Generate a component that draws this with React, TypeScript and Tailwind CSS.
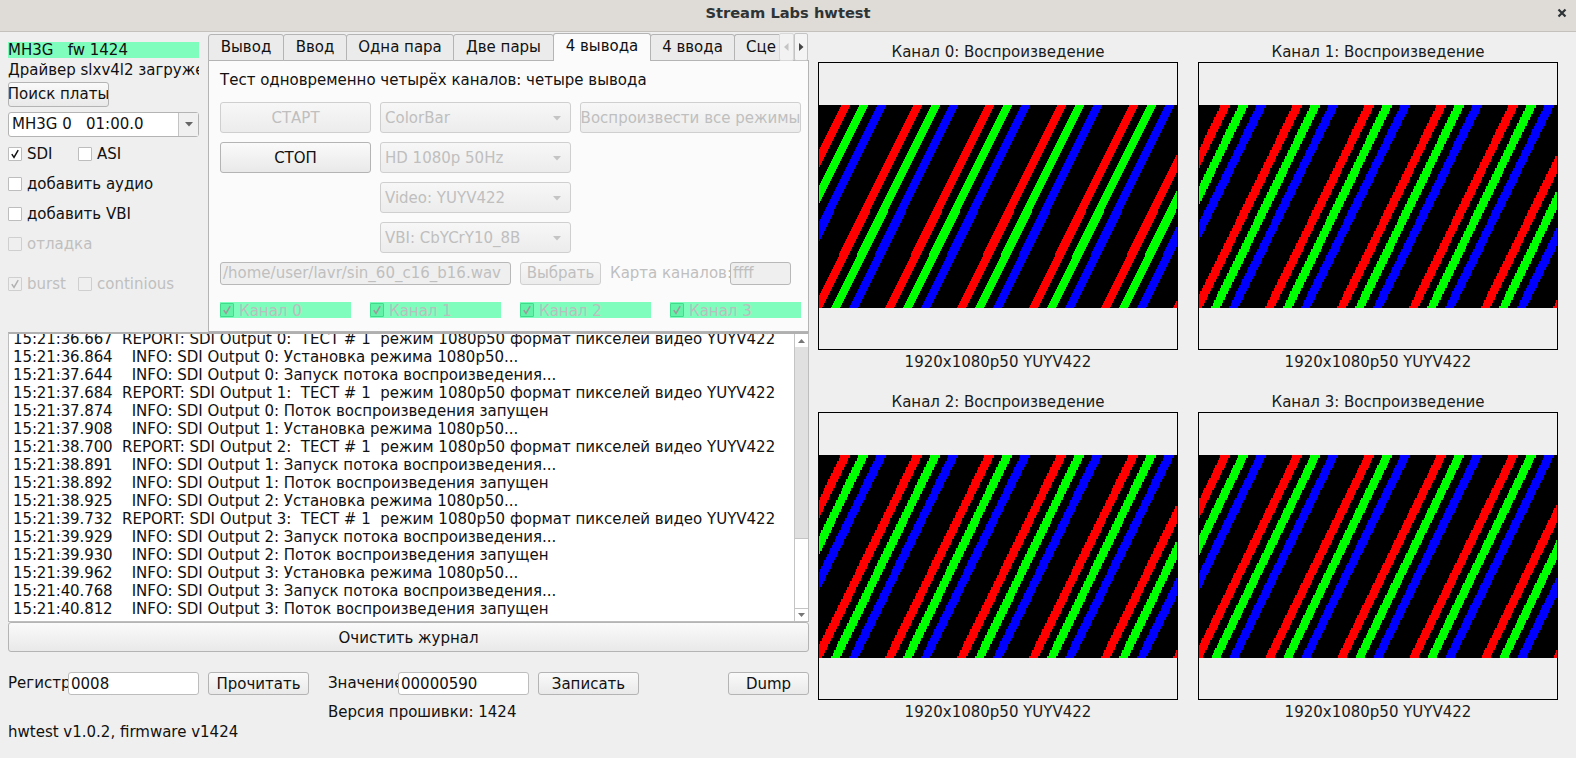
import type { ReactNode } from "react";

const LOG: string[] = [
  "15:21:36.667  REPORT: SDI Output 0:  ТЕСТ # 1  режим 1080p50 формат пикселей видео YUYV422",
  "15:21:36.864    INFO: SDI Output 0: Установка режима 1080p50...",
  "15:21:37.644    INFO: SDI Output 0: Запуск потока воспроизведения...",
  "15:21:37.684  REPORT: SDI Output 1:  ТЕСТ # 1  режим 1080p50 формат пикселей видео YUYV422",
  "15:21:37.874    INFO: SDI Output 0: Поток воспроизведения запущен",
  "15:21:37.908    INFO: SDI Output 1: Установка режима 1080p50...",
  "15:21:38.700  REPORT: SDI Output 2:  ТЕСТ # 1  режим 1080p50 формат пикселей видео YUYV422",
  "15:21:38.891    INFO: SDI Output 1: Запуск потока воспроизведения...",
  "15:21:38.892    INFO: SDI Output 1: Поток воспроизведения запущен",
  "15:21:38.925    INFO: SDI Output 2: Установка режима 1080p50...",
  "15:21:39.732  REPORT: SDI Output 3:  ТЕСТ # 1  режим 1080p50 формат пикселей видео YUYV422",
  "15:21:39.929    INFO: SDI Output 2: Запуск потока воспроизведения...",
  "15:21:39.930    INFO: SDI Output 2: Поток воспроизведения запущен",
  "15:21:39.962    INFO: SDI Output 3: Установка режима 1080p50...",
  "15:21:40.768    INFO: SDI Output 3: Запуск потока воспроизведения...",
  "15:21:40.812    INFO: SDI Output 3: Поток воспроизведения запущен",
];

const TABS = [
  { label: "Вывод", w: "w-[76px]" },
  { label: "Ввод", w: "w-[64px]" },
  { label: "Одна пара", w: "w-[108px]" },
  { label: "Две пары", w: "w-[101px]" },
  { label: "4 вывода", w: "w-[98px]", active: true },
  { label: "4 ввода", w: "w-[85px]" },
];

const SELECTS = ["ColorBar", "HD 1080p 50Hz", "Video: YUYV422", "VBI: CbYCrY10_8B"];

function stripes(rowStep: number) {
  const colors = ["#ff0000", "#00ff00", "#0000ff"];
  return colors.map((color, c) => {
    let d = "";
    for (let y = 0; y < 203; y += rowStep) {
      for (let k = -1; k < 7; k++) {
        const x = 22 + 72 * k + 18 * c - 0.4934 * (y + rowStep / 2);
        d += `M${x.toFixed(2)} ${y}h9.3v${rowStep}h-9.3z`;
      }
    }
    return { color, d };
  });
}

function Check({ checked, disabled, green }: { checked?: boolean; disabled?: boolean; green?: boolean }) {
  const box = green
    ? "bg-[#62f2a8] border-[#3fdc8c]"
    : disabled
      ? "bg-[#efefef] border-[#cfcfcf]"
      : "bg-white border-[#bdbdbd]";
  const tick = green ? "#9a9a9a" : disabled ? "#b0b0b0" : "#111111";
  return (
    <span className={`flex h-[14px] w-[14px] shrink-0 items-center justify-center rounded-[1px] border ${box}`}>
      {checked && (
        <svg width="10" height="10" viewBox="0 0 10 10" fill="none">
          <path d="M1.8 5.2 L4 8.4 L8.2 1.2" stroke={tick} strokeWidth="1.5" />
        </svg>
      )}
    </span>
  );
}

function Option({ label, checked, disabled, className = "" }: { label: string; checked?: boolean; disabled?: boolean; className?: string }) {
  return (
    <div className={`flex h-[16px] items-center gap-[5px] whitespace-nowrap ${className}`}>
      <Check checked={checked} disabled={disabled} />
      <span className={disabled ? "text-[#bfbfbf]" : ""}>{label}</span>
    </div>
  );
}

function Button({ children, disabled, className = "" }: { children: ReactNode; disabled?: boolean; className?: string }) {
  const tone = disabled
    ? "border-[#cfcfcf] text-[#bfbfbf] from-[#f7f7f7] to-[#ececec]"
    : "border-[#b4b4b4] text-[#111111] from-[#fafafa] to-[#e9e9e9]";
  return (
    <div className={`flex shrink-0 items-center justify-center overflow-hidden whitespace-nowrap rounded-[3px] border bg-gradient-to-b ${tone} ${className}`}>
      {children}
    </div>
  );
}

function Arrow({ color = "#c4c4c4" }: { color?: string }) {
  return (
    <svg width="8" height="5" viewBox="0 0 8 5">
      <path d="M0 0H8L4 4.5Z" fill={color} />
    </svg>
  );
}

function Select({ label }: { label: string }) {
  return (
    <div className="flex h-[31px] w-[191px] items-center justify-between rounded-[3px] border border-[#cfcfcf] bg-gradient-to-b from-[#f7f7f7] to-[#ececec] pl-[4px] pr-[9px] pt-[2px] text-[#bfbfbf]">
      <span>{label}</span>
      <Arrow />
    </div>
  );
}

function Field({ value, disabled, className = "" }: { value: string; disabled?: boolean; className?: string }) {
  const tone = disabled ? "bg-[#efefef] border-[#b8b8b8] text-[#bfbfbf]" : "bg-white border-[#bdbdbd]";
  return (
    <div className={`flex h-[23px] shrink-0 items-center overflow-hidden whitespace-nowrap rounded-[3px] border pl-[2px] ${tone} ${className}`}>
      {value}
    </div>
  );
}

function Channel({ label }: { label: string }) {
  return (
    <div className="flex h-[16px] w-[131px] shrink-0 items-center gap-[5px] bg-[#7ffdbd] text-[#bdbdbd]">
      <Check checked green />
      <span className="pt-[2px]">{label}</span>
    </div>
  );
}

function Preview({ index, rowStep }: { index: number; rowStep: number }) {
  return (
    <div className="flex w-[360px] flex-col items-center">
      <div className="flex h-[20px] items-center text-[#1a1a1a]">Канал {index}: Воспроизведение</div>
      <div className="flex h-[288px] w-[360px] flex-col justify-center border border-black bg-[#efefef]">
        <svg className="mt-[1px] block bg-black" width="358" height="203" viewBox="0 0 358 203" shapeRendering="crispEdges">
          {stripes(rowStep).map((s) => (
            <path key={s.color} d={s.d} fill={s.color} />
          ))}
        </svg>
      </div>
      <div className="flex h-[24px] items-center text-[#1a1a1a]">1920x1080p50 YUYV422</div>
    </div>
  );
}

export default function App() {
  return (
    <div className="flex h-[758px] w-[1576px] flex-col overflow-hidden bg-[#efefef] text-[15px] text-[#111111] [font-family:'DejaVu_Sans',sans-serif]">
      <div className="flex h-[32px] shrink-0 items-center justify-center border-b border-[#c4c1bc] bg-[#dfdbd6] pb-[6px]">
        <span className="w-full pl-[19px] text-center text-[14.67px] font-bold text-[#2e3436]">Stream Labs hwtest</span>
        <svg className="mr-[9px] shrink-0" width="10" height="10" viewBox="0 0 10 10" fill="none">
          <path d="M1.5 1.5L8.5 8.5M8.5 1.5L1.5 8.5" stroke="#2e3436" strokeWidth="2.2" />
        </svg>
      </div>

      <div className="flex min-h-0 flex-1">
        <div className="flex w-[818px] shrink-0 flex-col pl-[8px] pr-[9px]">
          <div className="flex h-[300px] shrink-0 gap-[9px]">
            <div className="flex w-[191px] shrink-0 flex-col pt-[10px]">
              <div className="flex h-[16px] items-center whitespace-pre bg-[#7ffdbd]">MH3G   fw 1424</div>
              <div className="mt-[4px] flex h-[16px] items-center overflow-hidden whitespace-nowrap">Драйвер slxv4l2 загружен</div>
              <Button className="mt-[4px] h-[25px] w-[101px]">Поиск платы</Button>
              <div className="mt-[5px] flex h-[25px] items-center rounded-[3px] border border-[#b4b4b4] bg-white">
                <span className="flex-1 whitespace-pre pl-[3px]">MH3G 0   01:00.0</span>
                <span className="flex h-full w-[20px] items-center justify-center border-l border-[#c4c4c4] bg-[#f0f0f0]">
                  <Arrow color="#666666" />
                </span>
              </div>
              <div className="mt-[9px] flex">
                <Option label="SDI" checked className="w-[70px]" />
                <Option label="ASI" />
              </div>
              <Option label="добавить аудио" className="mt-[14px]" />
              <Option label="добавить VBI" className="mt-[14px]" />
              <Option label="отладка" disabled className="mt-[14px]" />
              <div className="mt-[24px] flex">
                <Option label="burst" checked disabled className="w-[70px]" />
                <Option label="continious" disabled />
              </div>
            </div>

            <div className="flex min-w-0 flex-1 flex-col">
              <div className="relative z-10 -mb-px flex h-[29px] shrink-0 items-end pt-[1px]">
                {TABS.map((t) => (
                  <div
                    key={t.label}
                    className={
                      t.active
                        ? `flex h-[28px] ${t.w} -ml-px shrink-0 items-center justify-center rounded-t-[3px] border border-b-0 border-[#b4b4b4] bg-[#fbfbfb] pb-[2px]`
                        : `flex h-[27px] ${t.w} -ml-px shrink-0 items-center justify-center rounded-t-[3px] border border-[#b4b4b4] bg-[#ebebeb] first:ml-0`
                    }
                  >
                    {t.label}
                  </div>
                ))}
                <div className="flex h-[27px] w-[45px] -ml-px shrink-0 items-center overflow-hidden rounded-tl-[3px] border border-r-0 border-[#b4b4b4] bg-[#ebebeb] pl-[11px]">
                  Сце
                </div>
                <div className="flex h-[28px] w-[15px] shrink-0 items-center justify-center rounded-[2px] border border-[#d8d8d8] bg-[#f2f2f2]">
                  <svg width="5" height="8" viewBox="0 0 5 8"><path d="M4.5 0V8L0 4Z" fill="#c4c4c4" /></svg>
                </div>
                <div className="flex h-[28px] w-[14px] shrink-0 items-center justify-center rounded-[2px] border border-[#c4c4c4] bg-[#f4f4f4]">
                  <svg width="5" height="8" viewBox="0 0 5 8"><path d="M0 0V8L4.5 4Z" fill="#444444" /></svg>
                </div>
              </div>
              <div className="flex min-h-0 flex-1 flex-col border border-[#b4b4b4] bg-[#fbfbfb] pl-[11px] pr-[6px]">
                <div className="flex h-[38px] shrink-0 items-center pt-[1px]">Тест одновременно четырёх каналов: четыре вывода</div>
                <div className="mt-[3px] flex gap-[9px]">
                  <div className="flex w-[151px] flex-col gap-[9px]">
                    <Button disabled className="h-[31px] w-[151px] pt-[2px]">СТАРТ</Button>
                    <Button className="h-[31px] w-[151px] pt-[2px]">СТОП</Button>
                  </div>
                  <div className="flex flex-col gap-[9px]">
                    {SELECTS.map((s) => (
                      <Select key={s} label={s} />
                    ))}
                  </div>
                  <Button disabled className="h-[31px] w-[221px] pt-[2px]">Воспроизвести все режимы</Button>
                </div>
                <div className="mt-[9px] flex items-center">
                  <Field value="/home/user/lavr/sin_60_c16_b16.wav" disabled className="w-[291px]" />
                  <Button disabled className="ml-[9px] h-[23px] w-[81px]">Выбрать</Button>
                  <span className="ml-[9px] w-[120px] shrink-0 overflow-hidden whitespace-nowrap text-[#bfbfbf]">Карта каналов:</span>
                  <Field value="ffff" disabled className="w-[61px]" />
                </div>
                <div className="mt-[17px] flex gap-[19px]">
                  <Channel label="Канал 0" />
                  <Channel label="Канал 1" />
                  <Channel label="Канал 2" />
                  <Channel label="Канал 3" />
                </div>
              </div>
            </div>
          </div>

          <div className="flex h-[290px] shrink-0 border border-t-2 border-[#bdbdbd] border-t-[#b0b0b0] bg-white">
            <div className="min-w-0 flex-1 overflow-hidden pl-[4px]">
              <div className="-mt-[4px]">
                {LOG.map((line) => (
                  <div key={line} className="h-[18px] whitespace-pre leading-[18px]">
                    <span className="tracking-[-0.1px]">{line.slice(0, 12)}</span>
                    {line.slice(12)}
                  </div>
                ))}
              </div>
            </div>
            <div className="flex w-[14px] shrink-0 flex-col border-l border-[#c4c4c4]">
              <div className="flex h-[13px] shrink-0 items-center justify-center">
                <svg width="7" height="4" viewBox="0 0 7 4"><path d="M0 4H7L3.5 0Z" fill="#777777" /></svg>
              </div>
              <div className="h-[192px] shrink-0 border-b border-[#c4c4c4] bg-[#e0e0e0]" />
              <div className="flex-1" />
              <div className="flex h-[13px] shrink-0 items-center justify-center border-t border-[#c4c4c4]">
                <svg width="7" height="4" viewBox="0 0 7 4"><path d="M0 0H7L3.5 4Z" fill="#777777" /></svg>
              </div>
            </div>
          </div>
          <Button className="h-[30px] w-full pt-[2px]">Очистить журнал</Button>

          <div className="mt-[20px] flex items-center">
            <span className="w-[60px] shrink-0 overflow-hidden whitespace-nowrap">Регистр</span>
            <Field value="0008" className="w-[131px] pt-[2px]" />
            <Button className="ml-[9px] h-[23px] w-[101px] pt-[2px]">Прочитать</Button>
            <span className="ml-[19px] w-[70px] shrink-0 overflow-hidden whitespace-nowrap">Значение</span>
            <Field value="00000590" className="w-[131px] pt-[2px]" />
            <Button className="ml-[9px] h-[23px] w-[101px] pt-[2px]">Записать</Button>
            <Button className="ml-auto h-[23px] w-[81px] pt-[2px]">Dump</Button>
          </div>
          <div className="mt-[9px] flex h-[16px] items-center pl-[320px]">Версия прошивки: 1424</div>
          <div className="mt-[4px] flex h-[16px] items-center">hwtest v1.0.2, firmware v1424</div>
        </div>

        <div className="grid grid-cols-[360px_360px] content-start gap-x-[20px] gap-y-[18px] pt-[10px]">
          <Preview index={0} rowStep={2} />
          <Preview index={1} rowStep={3} />
          <Preview index={2} rowStep={3} />
          <Preview index={3} rowStep={2.5} />
        </div>
      </div>
    </div>
  );
}
